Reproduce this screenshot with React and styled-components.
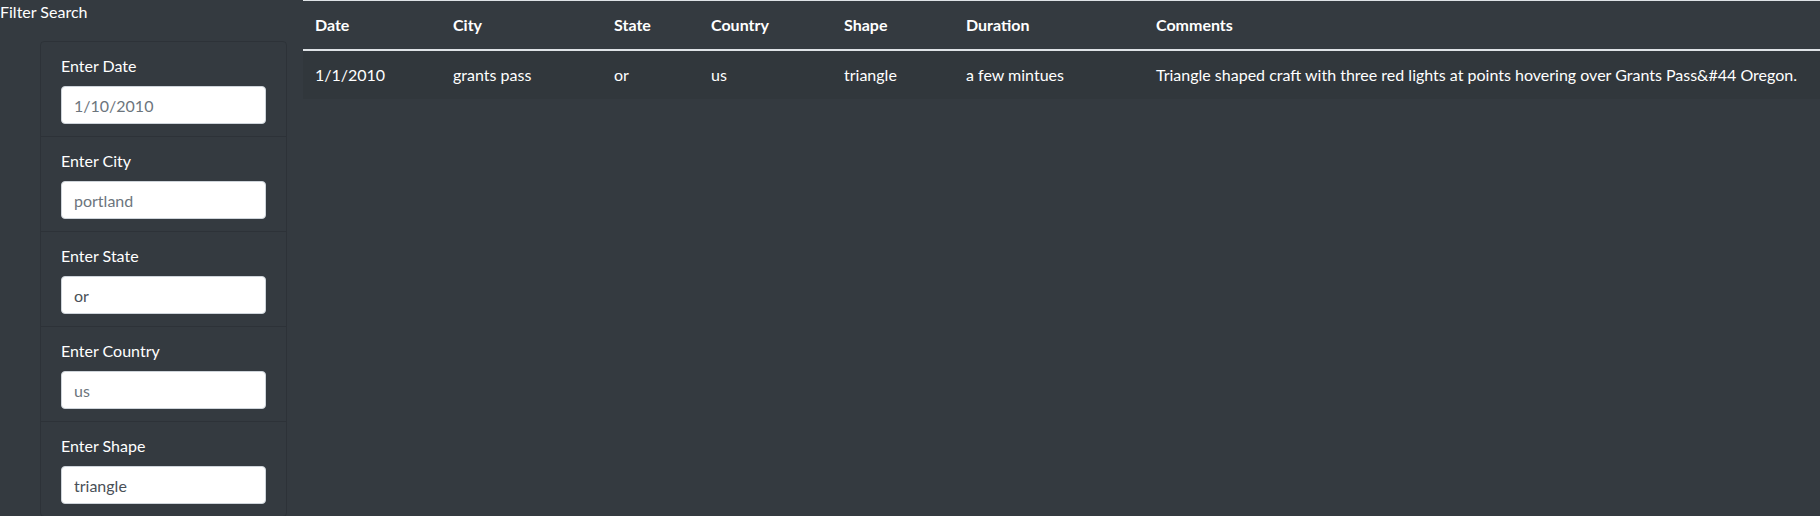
import React from "react";
import styled, { createGlobalStyle } from "styled-components";

const GlobalStyle = createGlobalStyle`
  body {
    margin: 0;
    background: #343a40;
    color: #fff;
    font-family: Lato, "Liberation Sans", sans-serif;
    font-size: 16px;
    line-height: 1.5;
  }
  * { box-sizing: border-box; }
`;

const Page = styled.div`
  display: flex;
  align-items: flex-start;
  width: 1820px;
`;

const Sidebar = styled.aside`
  width: 303px;
  flex-shrink: 0;
`;

const Title = styled.div`
  line-height: 24px;
`;

const FilterList = styled.ul`
  list-style: none;
  margin: 17px 16px 0 40px;
  padding: 0;
  border: 1px solid rgba(0, 0, 0, 0.125);
  border-radius: 4px;
`;

const FilterItem = styled.li`
  padding: 12px 20px;
  border-bottom: 1px solid rgba(0, 0, 0, 0.125);
  &:last-child { border-bottom: none; }
`;

const Label = styled.label`
  display: block;
  margin-bottom: 8px;
  line-height: 24px;
`;

const Input = styled.input`
  display: block;
  width: 100%;
  height: 38px;
  padding: 6px 12px;
  border: 1px solid #ced4da;
  border-radius: 4px;
  background: #fff;
  color: #495057;
  font-family: inherit;
  font-size: 16px;
  &::placeholder { color: #6c757d; opacity: 1; }
`;

const Table = styled.table`
  flex: 1;
  border-collapse: collapse;
  table-layout: fixed;
  border-top: 1px solid #dee2e6;
`;

const Th = styled.th`
  width: ${(p) => p.$w || "auto"};
  padding: 12px;
  text-align: left;
  font-weight: 700;
  border-bottom: 2px solid #dee2e6;
`;

const Row = styled.tr`
  background: rgba(0, 0, 0, 0.05);
`;

const Td = styled.td`
  padding: 12px;
  white-space: nowrap;
`;

const filters = [
  { label: "Enter Date", placeholder: "1/10/2010" },
  { label: "Enter City", placeholder: "portland" },
  { label: "Enter State", value: "or" },
  { label: "Enter Country", placeholder: "us" },
  { label: "Enter Shape", value: "triangle" },
];

const columns = [
  ["Date", "138px"],
  ["City", "161px"],
  ["State", "97px"],
  ["Country", "133px"],
  ["Shape", "122px"],
  ["Duration", "190px"],
  ["Comments", null],
];

const rows = [
  [
    "1/1/2010",
    "grants pass",
    "or",
    "us",
    "triangle",
    "a few mintues",
    "Triangle shaped craft with three red lights at points hovering over Grants Pass&#44 Oregon.",
  ],
];

export default function App() {
  return (
    <>
      <GlobalStyle />
      <Page>
        <Sidebar>
          <Title>Filter Search</Title>
          <FilterList>
            {filters.map((f) => (
              <FilterItem key={f.label}>
                <Label>{f.label}</Label>
                <Input
                  placeholder={f.placeholder}
                  defaultValue={f.value}
                />
              </FilterItem>
            ))}
          </FilterList>
        </Sidebar>
        <Table>
          <thead>
            <tr>
              {columns.map(([name, w]) => (
                <Th key={name} $w={w}>{name}</Th>
              ))}
            </tr>
          </thead>
          <tbody>
            {rows.map((r, i) => (
              <Row key={i}>
                {r.map((c, j) => (
                  <Td key={j}>{c}</Td>
                ))}
              </Row>
            ))}
          </tbody>
        </Table>
      </Page>
    </>
  );
}
